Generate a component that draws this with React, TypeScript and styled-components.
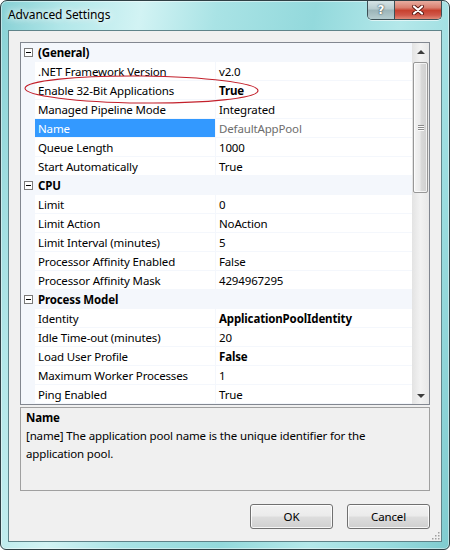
import React from 'react';
import styled, { createGlobalStyle, css } from 'styled-components';

type Row =
  | { kind: 'category'; name: string }
  | { kind: 'property'; name: string; value: string; bold?: boolean; selected?: boolean };

const ROWS: Row[] = [
  { kind: 'category', name: '(General)' },
  { kind: 'property', name: '.NET Framework Version', value: 'v2.0' },
  { kind: 'property', name: 'Enable 32-Bit Applications', value: 'True', bold: true },
  { kind: 'property', name: 'Managed Pipeline Mode', value: 'Integrated' },
  { kind: 'property', name: 'Name', value: 'DefaultAppPool', selected: true },
  { kind: 'property', name: 'Queue Length', value: '1000' },
  { kind: 'property', name: 'Start Automatically', value: 'True' },
  { kind: 'category', name: 'CPU' },
  { kind: 'property', name: 'Limit', value: '0' },
  { kind: 'property', name: 'Limit Action', value: 'NoAction' },
  { kind: 'property', name: 'Limit Interval (minutes)', value: '5' },
  { kind: 'property', name: 'Processor Affinity Enabled', value: 'False' },
  { kind: 'property', name: 'Processor Affinity Mask', value: '4294967295' },
  { kind: 'category', name: 'Process Model' },
  { kind: 'property', name: 'Identity', value: 'ApplicationPoolIdentity', bold: true },
  { kind: 'property', name: 'Idle Time-out (minutes)', value: '20' },
  { kind: 'property', name: 'Load User Profile', value: 'False', bold: true },
  { kind: 'property', name: 'Maximum Worker Processes', value: '1' },
  { kind: 'property', name: 'Ping Enabled', value: 'True' },
];

const LINE = '#f4f7fc';

const GlobalStyle = createGlobalStyle`
  html, body {
    margin: 0;
    padding: 0;
    background: #ffffff;
  }
  body {
    font-family: "Noto Sans", "Open Sans", sans-serif;
    font-size: 11.5px;
    letter-spacing: -0.15px;
    color: #000;
  }
  * {
    box-sizing: border-box;
  }
`;

export default function App() {
  return (
    <>
      <GlobalStyle />
      <Window>
        <TitleBar>
          <Title>Advanced Settings</Title>
          <Controls>
            <HelpButton>?</HelpButton>
            <CloseButton>
              <svg width="14" height="10" viewBox="0 0 14 10">
                <path d="M3 1.5 L11 8.5 M11 1.5 L3 8.5" stroke="#5a1a14" strokeWidth="4" strokeLinecap="round" />
                <path d="M3 1.5 L11 8.5 M11 1.5 L3 8.5" stroke="#ffffff" strokeWidth="2.2" strokeLinecap="round" />
              </svg>
            </CloseButton>
          </Controls>
        </TitleBar>

        <Client>
          <Grid>
            <Rows>
              {ROWS.map((row, idx) =>
                row.kind === 'category' ? (
                  <CategoryRow key={idx}>
                    <Margin>
                      <Toggle />
                    </Margin>
                    <CategoryName>{row.name}</CategoryName>
                  </CategoryRow>
                ) : (
                  <PropertyRow key={idx}>
                    <Margin />
                    <Label $selected={row.selected}>{row.name}</Label>
                    <Value $bold={row.bold} $muted={row.selected}>
                      {row.value}
                    </Value>
                  </PropertyRow>
                )
              )}
            </Rows>
            <ScrollBar>
              <ArrowButton>
                <Arrow $dir="up" />
              </ArrowButton>
              <Track>
                <Thumb $offset={2} $length={131}>
                  <Grip>
                    <span />
                    <span />
                    <span />
                  </Grip>
                </Thumb>
              </Track>
              <ArrowButton>
                <Arrow $dir="down" />
              </ArrowButton>
            </ScrollBar>
          </Grid>

          <HelpPane>
            <HelpTitle>Name</HelpTitle>
            <HelpText>[name] The application pool name is the unique identifier for the application pool.</HelpText>
          </HelpPane>

          <ButtonRow>
            <DialogButton>OK</DialogButton>
            <DialogButton>Cancel</DialogButton>
          </ButtonRow>

          <SizeGrip width="10" height="10" viewBox="0 0 10 10">
            {[
              [8, 2],
              [8, 5],
              [5, 5],
              [8, 8],
              [5, 8],
              [2, 8],
            ].map(([x, y], i) => (
              <rect key={i} x={x} y={y} width="1.5" height="1.5" fill="#a0a0a0" />
            ))}
          </SizeGrip>
        </Client>

        <Annotation width="450" height="550" viewBox="0 0 450 550">
          <ellipse
            cx="141.5"
            cy="89.5"
            rx="116.5"
            ry="13.5"
            transform="rotate(0.6 141.5 89.5)"
            fill="none"
            stroke="#c3202b"
            strokeWidth="1.1"
          />
        </Annotation>
      </Window>
    </>
  );
}

const Window = styled.div`
  position: relative;
  width: 450px;
  height: 550px;
  display: flex;
  flex-direction: column;
  border: 1px solid #2f4045;
  border-radius: 7px 7px 6px 6px;
  overflow: hidden;
  background: linear-gradient(
    100deg,
    #86d0d4 0%,
    #b2e7e9 12%,
    #d2f3f4 26%,
    #a9e3e5 40%,
    #93d9dc 58%,
    #b4e8ea 74%,
    #9adcdf 88%,
    #7fcbcf 100%
  );
  box-shadow: inset 0 0 0 1px rgba(255, 255, 255, 0.45);
`;

const TitleBar = styled.div`
  height: 29px;
  display: flex;
  align-items: flex-start;
  padding-left: 7px;
`;

const Title = styled.div`
  flex: 1;
  padding-top: 6px;
  font-size: 12px;
  letter-spacing: -0.1px;
  line-height: 16px;
  color: #000;
  text-shadow: 0 0 6px rgba(255, 255, 255, 0.95), 0 0 10px rgba(255, 255, 255, 0.8);
`;

const Controls = styled.div`
  display: flex;
  margin-top: -1px;
  margin-right: 7px;
  border: 1px solid #3c4f55;
  border-top: none;
  border-radius: 0 0 5px 5px;
  overflow: hidden;
  box-shadow: 0 1px 0 rgba(255, 255, 255, 0.6);
`;

const controlButton = css`
  height: 19px;
  display: flex;
  align-items: center;
  justify-content: center;
`;

const HelpButton = styled.div`
  ${controlButton};
  width: 27px;
  border-right: 1px solid #3c4f55;
  background: linear-gradient(#d9e6e8 0%, #b9cdd0 45%, #9cb5b9 55%, #b6cdd0 100%);
  color: #fff;
  font-family: "DejaVu Sans", sans-serif;
  font-weight: bold;
  font-size: 12px;
  text-shadow: 0 0 2px #3a4c52, 0 0 1px #3a4c52;
`;

const CloseButton = styled.div`
  ${controlButton};
  width: 46px;
  background: linear-gradient(#eab4a8 0%, #d98070 40%, #c7412f 55%, #d0584a 80%, #e08a77 100%);
`;

const Client = styled.div`
  position: relative;
  flex: 1;
  margin: 0 7px 7px 7px;
  border: 1px solid #5f8389;
  background: #f0f0f0;
  padding: 11px 11px 12px 11px;
  display: flex;
  flex-direction: column;
`;

const Grid = styled.div`
  display: flex;
  border: 1px solid #828790;
  background: #ffffff;
`;

const Rows = styled.div`
  flex: 1;
  display: flex;
  flex-direction: column;
`;

const rowBase = css`
  display: flex;
  height: 19px;
  border-bottom: 1px solid ${LINE};
  line-height: 19px;
  white-space: nowrap;
`;

const CategoryRow = styled.div`
  ${rowBase};
  background: ${LINE};
`;

const PropertyRow = styled.div`
  ${rowBase};
`;

const Margin = styled.div`
  width: 14px;
  flex: none;
  background: ${LINE};
  display: flex;
  align-items: center;
  padding-left: 3px;
`;

const Toggle = styled.div`
  position: relative;
  width: 9px;
  height: 9px;
  border: 1px solid #7a7a7a;
  background: #ffffff;

  &::after {
    content: '';
    position: absolute;
    left: 1px;
    top: 3px;
    width: 5px;
    height: 1px;
    background: #000;
  }
`;

const CategoryName = styled.div`
  padding-left: 3px;
  font-weight: bold;
`;

const Label = styled.div<{ $selected?: boolean }>`
  width: 181px;
  flex: none;
  padding-left: 3px;
  border-right: 1px solid ${LINE};
  overflow: hidden;
  ${(p) =>
    p.$selected &&
    css`
      background: #3399ff;
      color: #ffffff;
    `}
`;

const Value = styled.div<{ $bold?: boolean; $muted?: boolean }>`
  flex: 1;
  padding-left: 3px;
  font-weight: ${(p) => (p.$bold ? 'bold' : 'normal')};
  color: ${(p) => (p.$muted ? '#6d6d6d' : '#000')};
`;

const ScrollBar = styled.div`
  width: 17px;
  flex: none;
  display: flex;
  flex-direction: column;
  background: linear-gradient(90deg, #e3e3e3 0%, #f2f2f2 50%, #e8e8e8 100%);
`;

const ArrowButton = styled.div`
  height: 17px;
  flex: none;
  display: flex;
  align-items: center;
  justify-content: center;
`;

const Arrow = styled.div<{ $dir: 'up' | 'down' }>`
  width: 0;
  height: 0;
  border-left: 4px solid transparent;
  border-right: 4px solid transparent;
  ${(p) =>
    p.$dir === 'up'
      ? css`
          border-bottom: 4px solid #3c3c3c;
        `
      : css`
          border-top: 4px solid #3c3c3c;
        `}
`;

const Track = styled.div`
  flex: 1;
  padding: 0 1px;
`;

const Thumb = styled.div<{ $offset: number; $length: number }>`
  margin-top: ${(p) => p.$offset}px;
  height: ${(p) => p.$length}px;
  border: 1px solid #979797;
  border-radius: 2px;
  background: linear-gradient(90deg, #f4f4f4 0%, #eaeaea 45%, #d9d9d9 55%, #cfcfcf 100%);
  box-shadow: inset 0 0 0 1px rgba(255, 255, 255, 0.7);
  display: flex;
  align-items: center;
  justify-content: center;
`;

const Grip = styled.div`
  display: flex;
  flex-direction: column;
  gap: 1px;

  span {
    display: block;
    width: 6px;
    height: 1px;
    background: #8a8a8a;
    box-shadow: 0 1px 0 #fafafa;
  }
`;

const HelpPane = styled.div`
  margin-top: 2px;
  height: 84px;
  border: 1px solid #a0a0a0;
  padding: 1px 5px;
  line-height: 18px;
`;

const HelpTitle = styled.div`
  font-weight: bold;
`;

const HelpText = styled.div``;

const ButtonRow = styled.div`
  margin-top: 13px;
  display: flex;
  justify-content: flex-end;
  gap: 14px;
`;

const DialogButton = styled.div`
  width: 83px;
  height: 25px;
  border: 1px solid #707070;
  border-radius: 3px;
  background: linear-gradient(#f2f2f2 0%, #ebebeb 48%, #dddddd 52%, #cfcfcf 100%);
  box-shadow: inset 0 0 0 1px rgba(255, 255, 255, 0.8);
  display: flex;
  align-items: center;
  justify-content: center;
  line-height: 1;
`;

const SizeGrip = styled.svg`
  position: absolute;
  right: 1px;
  bottom: 1px;
`;

const Annotation = styled.svg`
  position: absolute;
  left: -1px;
  top: -1px;
  pointer-events: none;
`;
